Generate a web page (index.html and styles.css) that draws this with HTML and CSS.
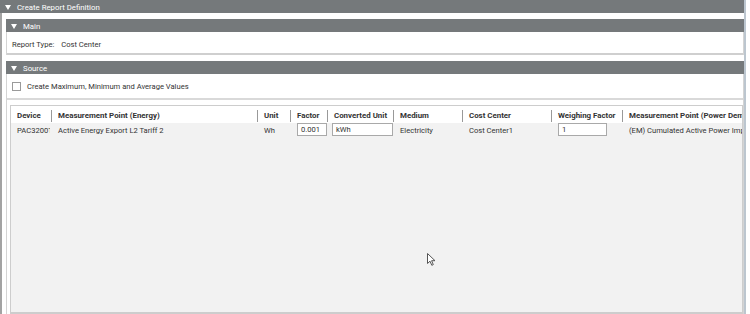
FILE: index.html
```html
<!DOCTYPE html>
<html>
<head>
<meta charset="utf-8">
<link rel="stylesheet" href="styles.css">
</head>
<body>
<div class="window">
  <div class="panel">
    <div class="titlebar"><span class="tri"></span>Create Report Definition</div>
    <div class="panel-body">
      <section class="section main">
        <div class="sec-head"><span class="tri"></span>Main</div>
        <div class="sec-content">
          <span class="lbl">Report Type:</span><span class="val">Cost Center</span>
        </div>
      </section>
      <section class="section source">
        <div class="sec-head"><span class="tri"></span>Source</div>
        <div class="check-row">
          <span class="checkbox"></span><span>Create Maximum, Minimum and Average Values</span>
        </div>
        <div class="table">
          <div class="grid head">
            <div class="cell">Device</div>
            <div class="cell sep">Measurement Point (Energy)</div>
            <div class="cell sep">Unit</div>
            <div class="cell sep">Factor</div>
            <div class="cell sep">Converted Unit</div>
            <div class="cell sep">Medium</div>
            <div class="cell sep">Cost Center</div>
            <div class="cell sep">Weighing Factor</div>
            <div class="cell sep">Measurement Point (Power Demand)</div>
          </div>
          <div class="grid row">
            <div class="cell"><span class="clip-box">PAC3200T_1</span></div>
            <div class="cell">Active Energy Export L2 Tariff 2</div>
            <div class="cell">Wh</div>
            <div class="cell"><span class="input factor">0.001</span></div>
            <div class="cell"><span class="input conv">kWh</span></div>
            <div class="cell">Electricity</div>
            <div class="cell">Cost Center1</div>
            <div class="cell"><span class="input weigh">1</span></div>
            <div class="cell">(EM) Cumulated Active Power Import</div>
          </div>
          <div class="cursor">
            <svg width="10" height="14" viewBox="0 0 10 14"><path d="M0.5 0.5 L0.5 10.5 L3 8.2 L4.8 12.3 L6.3 11.6 L4.6 7.7 L8 7.7 Z" fill="#fff" stroke="#555" stroke-width="1"/></svg>
          </div>
        </div>
      </section>
    </div>
  </div>
</div>
</body>
</html>
```
FILE: styles.css
```css
* { box-sizing: border-box; }
html, body { margin: 0; padding: 0; }
body {
  width: 750px;
  height: 314px;
  overflow: hidden;
  background: #fff;
  font-family: Roboto, "Noto Sans", sans-serif;
  font-size: 7.6px;
  color: #333;
}
.window {
  display: flex;
  height: 314px;
}
.panel {
  width: 746px;
  height: 314px;
  display: flex;
  flex-direction: column;
  border-right: 2px solid #bcc6cf;
}
.titlebar {
  height: 13px;
  background: #75797b;
  color: #fff;
  font-size: 7.8px;
  padding: 1px 0 0 5px;
  white-space: nowrap;
  display: flex;
  align-items: center;
}
.tri {
  width: 0;
  height: 0;
  border-left: 3px solid transparent;
  border-right: 3px solid transparent;
  border-top: 5px solid #fff;
  margin-right: 6px;
}
.panel-body {
  flex: 1;
  border-left: 2px solid #a3a3a3;
  padding: 6px 0 0 4px;
  display: flex;
  flex-direction: column;
  gap: 6px;
}
.section {
  border-left: 1px solid #d4d4d4;
  border-right: 1px solid #d4d4d4;
}
.sec-head {
  height: 13px;
  background: #75797b;
  color: #fff;
  font-size: 7.8px;
  padding: 1px 0 0 5px;
  margin-left: -1px;
  margin-right: -1px;
  display: flex;
  align-items: center;
}
.main .sec-content {
  height: 23px;
  border-bottom: 2px solid #cfcfcf;
  padding: 7px 0 0 5px;
  line-height: 11px;
}
.lbl { margin-right: 7px; }
.source {
  flex: 1;
  display: flex;
  flex-direction: column;
}
.check-row {
  height: 26px;
  border-bottom: 2px solid #d9d9d9;
  display: flex;
  align-items: center;
  padding: 0 0 0 5px;
  gap: 6px;
}
.checkbox {
  width: 9px;
  height: 9px;
  border: 1px solid #9a9a9a;
  background: #fff;
}
.table {
  position: relative;
  flex: 1;
  margin: 5px 0 0 3px;
  border: 1px solid #cdcdcd;
  border-bottom-width: 2px;
  background: #f2f2f2;
  overflow: hidden;
}
.grid {
  display: grid;
  grid-template-columns: 40px 206px 33px 37px 66px 69px 89px 71px 1fr;
  white-space: nowrap;
}
.head {
  height: 17px;
  padding-top: 2px;
  background: #fff;
  font-weight: bold;
  font-size: 7.9px;
  align-items: center;
}
.head .cell {
  line-height: 12px;
}
.cell {
  padding-left: 6px;
  overflow: hidden;
}
.head .sep {
  border-left: 1px solid #999;
}
.row {
  height: 16px;
  align-items: start;
  line-height: 15px;
}
.row .cell { padding-left: 6px; }
.row .cell:nth-child(n+2) { padding-left: 7px; }
.clip-box {
  display: block;
  width: 33px;
  overflow: hidden;
}
.input {
  display: block;
  height: 13px;
  border: 1px solid #a9a9a9;
  background: #fff;
  line-height: 11px;
  padding-left: 3px;
}
.factor { width: 30px; }
.conv { width: 61px; margin-left: -2px; }
.weigh { width: 49px; }
.cursor {
  position: absolute;
  left: 416px;
  top: 147px;
  line-height: 0;
}
```
